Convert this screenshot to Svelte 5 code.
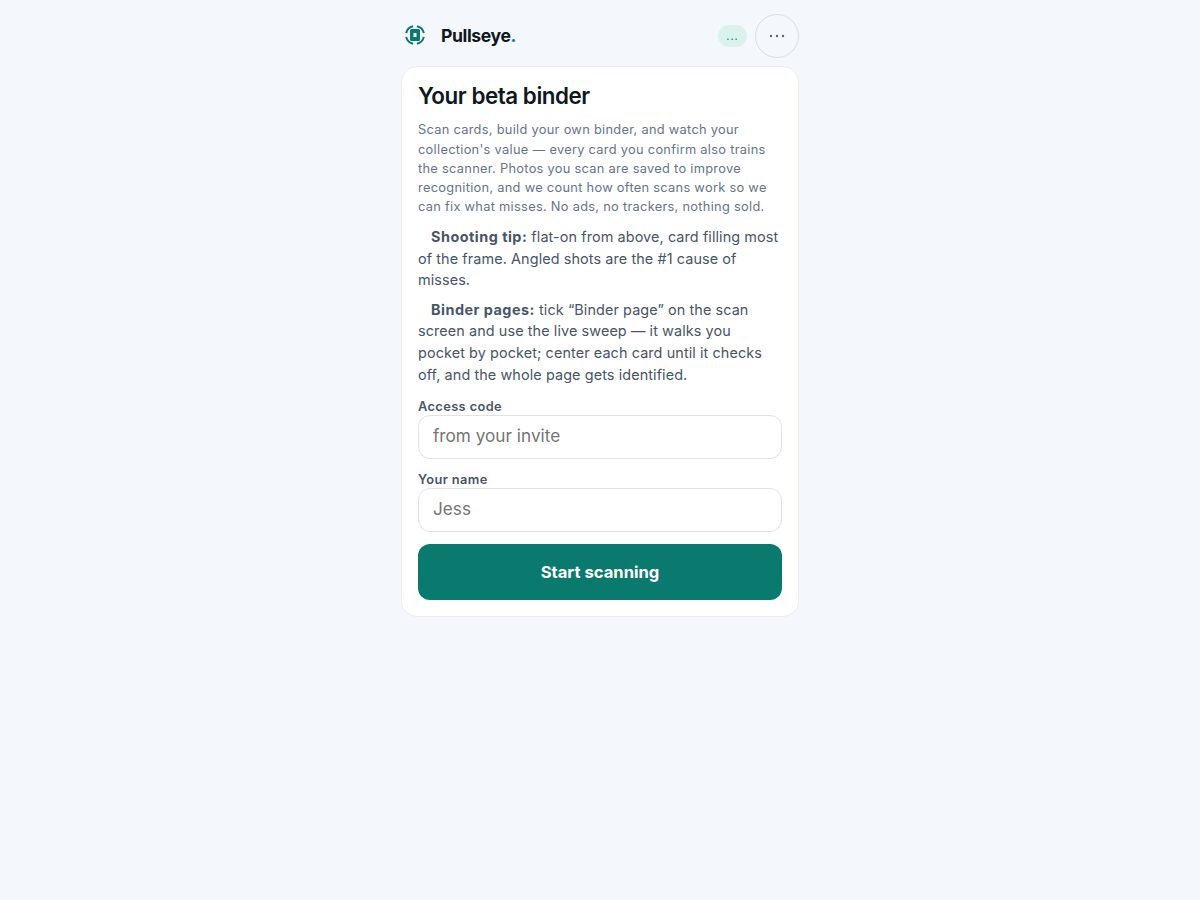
<script>
  let code = $state('');
  let name = $state('');
</script>

<div class="page">
  <header>
    <div class="brand">
      <svg width="24" height="24" viewBox="0 0 24 24" fill="none">
        <path d="M13.9 3.2A9 9 0 0 1 20.8 10.1M20.8 13.9A9 9 0 0 1 13.9 20.8M10.1 20.8A9 9 0 0 1 3.2 13.9M3.2 10.1A9 9 0 0 1 10.1 3.2" stroke="#0b7a6e" stroke-width="2"/>
        <rect x="7" y="6" width="10" height="12" rx="1.5" fill="#0b7a6e"/>
        <rect x="10.5" y="10" width="3" height="4" fill="#e6f4f1"/>
      </svg>
      <span class="word">Pullseye<span class="dot">.</span></span>
    </div>
    <div class="right">
      <span class="pill">...</span>
      <button class="more" aria-label="Menu">
        <svg width="16" height="4" viewBox="0 0 16 4"><circle cx="2" cy="2" r="1.2" fill="#5b6470"/><circle cx="8" cy="2" r="1.2" fill="#5b6470"/><circle cx="14" cy="2" r="1.2" fill="#5b6470"/></svg>
      </button>
    </div>
  </header>

  <main class="card">
    <h1>Your beta binder</h1>
    <p class="lead">Scan cards, build your own binder, and watch your collection's value — every card you confirm also trains the scanner. Photos you scan are saved to improve recognition, and we count how often scans work so we can fix what misses. No ads, no trackers, nothing sold.</p>
    <p class="tip"><strong>Shooting tip:</strong> flat-on from above, card filling most of the frame. Angled shots are the #1 cause of misses.</p>
    <p class="tip"><strong>Binder pages:</strong> tick “Binder page” on the scan screen and use the live sweep — it walks you pocket by pocket; center each card until it checks off, and the whole page gets identified.</p>
    <label for="code">Access code</label>
    <input id="code" placeholder="from your invite" bind:value={code} />
    <label for="name">Your name</label>
    <input id="name" placeholder="Jess" bind:value={name} />
    <button class="start">Start scanning</button>
  </main>
</div>

<style>
  :global(body) {
    background: #f4f7fb;
    font-family: Inter, "Liberation Sans", sans-serif;
  }
  .page {
    width: 398px;
    margin: 0 auto;
    padding-top: 14px;
  }
  header {
    display: flex;
    align-items: center;
    justify-content: space-between;
    height: 44px;
    margin-bottom: 8px;
  }
  .brand {
    display: flex;
    align-items: center;
    gap: 14px;
    padding: 0 0 2px 2px;
  }
  .word {
    font-size: 17.6px;
    font-weight: 700;
    letter-spacing: -0.4px;
    color: #0f1720;
  }
  .dot { color: #0b7a6e; }
  .right {
    display: flex;
    align-items: center;
    gap: 8px;
  }
  .pill {
    background: #d9f2ec;
    color: #0b7a6e;
    font-size: 11px;
    letter-spacing: 1px;
    width: 29px;
    text-align: center;
    padding: 3px 0;
    border-radius: 999px;
    height: 16px;
    line-height: 16px;
  }
  .more {
    width: 44px;
    height: 44px;
    border-radius: 50%;
    border: 1px solid #d8dee6;
    background: transparent;
    display: flex;
    align-items: center;
    justify-content: center;
    padding: 0;
  }
  .card {
    background: #fff;
    border: 1px solid #e9eef4;
    border-radius: 16px;
    padding: 16px;
    display: flex;
    flex-direction: column;
  }
  h1 {
    margin: 0 0 12.4px;
    font-size: 22.4px;
    line-height: 25px;
    font-weight: 600;
    letter-spacing: -0.45px;
    color: #0f1720;
  }
  .lead {
    margin: 0 0 9.6px;
    font-size: 12.8px;
    line-height: 19.2px;
    letter-spacing: 0.3px;
    color: #64748b;
  }
  .tip {
    margin: 0 0 8px;
    padding-right: 3px;
    font-size: 14.4px;
    line-height: 21.6px;
    letter-spacing: 0.1px;
    color: #475569;
    text-indent: 13px;
  }
  .tip strong {
    font-weight: 700;
    letter-spacing: 0.5px;
  }
  label {
    font-size: 12.8px;
    font-weight: 600;
    letter-spacing: 0.4px;
    color: #475569;
    margin-top: 6px;
    line-height: 16px;
  }
  input {
    height: 44px;
    box-sizing: border-box;
    border: 1px solid #dde3ea;
    border-radius: 12px;
    padding: 0 14px 4px;
    font: 17.2px Inter, "Liberation Sans", sans-serif;
    margin-bottom: 7px;
    color: #0f1720;
    background: #fff;
  }
  .start {
    height: 56px;
    margin-top: 5px;
    border: 0;
    border-radius: 12px;
    background: #0b7a6e;
    color: #fff;
    font: 700 16.6px Inter, "Liberation Sans", sans-serif;
  }
</style>
